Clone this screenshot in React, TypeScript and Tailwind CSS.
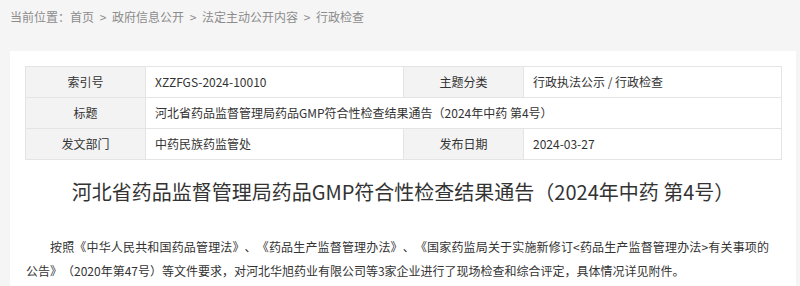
import React from "react";

const font = { fontFamily: '"Noto Sans CJK SC", "Noto Sans", sans-serif' };

function Sep() {
  return <span className="inline-block w-[18px] text-center">&gt;</span>;
}

export default function App() {
  const label = "bg-[#f3f3f3] border border-[#e4e4e4] text-center text-[#333] w-[120px]";
  const value = "border border-[#e4e4e4] text-left pl-[9px] text-[#333] w-[258px]";
  return (
    <div className="w-[800px] h-[286px] overflow-hidden bg-[#f5f5f5] [text-spacing-trim:space-all]" style={font}>
      <div className="h-[51px] pl-[10px] pt-[9px] text-[12px] leading-[16px] text-[#8c8c8c]">
        当前位置：首页<Sep />政府信息公开<Sep />法定主动公开内容<Sep />行政检查
      </div>
      <div className="ml-[10px] w-[786px] bg-white pt-[15px] pl-[15px] pb-[20px]">
        <table className="border-collapse text-[12px] w-[756px] table-fixed">
          <colgroup>
            <col className="w-[120px]" />
            <col className="w-[258px]" />
            <col className="w-[120px]" />
            <col className="w-[258px]" />
          </colgroup>
          <tbody>
            <tr className="h-[31px]">
              <td className={label}>索引号</td>
              <td className={value}>XZZFGS-2024-10010</td>
              <td className={label}>主题分类</td>
              <td className={value}>行政执法公示 / 行政检查</td>
            </tr>
            <tr className="h-[31px]">
              <td className={label}>标题</td>
              <td className={value} colSpan={3}>
                河北省药品监督管理局药品GMP符合性检查结果通告（2024年中药 第4号）
              </td>
            </tr>
            <tr className="h-[31px]">
              <td className={label}>发文部门</td>
              <td className={value}>中药民族药监管处</td>
              <td className={label}>发布日期</td>
              <td className={value}>2024-03-27</td>
            </tr>
          </tbody>
        </table>
        <h1 className="mt-[17px] w-[756px] text-center text-[20px] leading-[30px] text-[#333] font-normal">
          河北省药品监督管理局药品GMP符合性检查结果通告（2024年中药 第4号）
        </h1>
        <p className="mt-[28px] ml-[1px] w-[743px] text-[12px] leading-[24px] text-[#333] indent-[24px] text-justify">
          按照《中华人民共和国药品管理法》、《药品生产监督管理办法》、《国家药监局关于实施新修订&lt;药品生产监督管理办法&gt;有关事项的公告》（2020年第47号）等文件要求，对河北华旭药业有限公司等3家企业进行了现场检查和综合评定，具体情况详见附件。
        </p>
      </div>
    </div>
  );
}
